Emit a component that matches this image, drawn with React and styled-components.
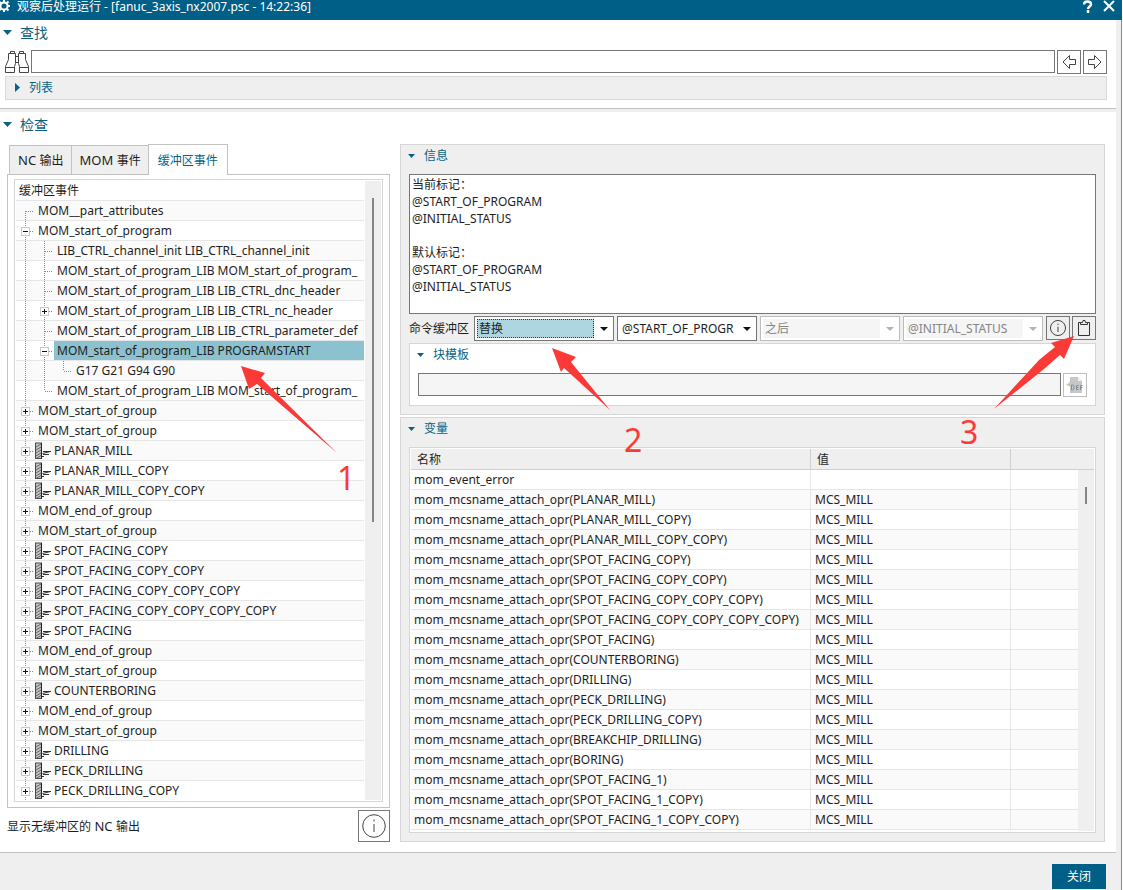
import React from "react";
import styled, { createGlobalStyle } from "styled-components";

const GlobalStyle = createGlobalStyle`
  * {
    box-sizing: border-box;
  }

  body {
    margin: 0;
    background: #fff;
    color: #1e1e1e;
    font-family: "Noto Sans", "Noto Sans CJK SC", sans-serif;
    font-size: 12px;
    line-height: 17px;
  }

  button,
  input,
  select,
  textarea {
    margin: 0;
    color: inherit;
    font: inherit;
    border-radius: 0;
  }
`;

const Dialog = styled.div`
  position: relative;
  display: flex;
  flex-direction: column;
  min-height: 100vh;
  margin-right: 1px;
`;

const TitleBar = styled.header`
  display: flex;
  align-items: center;
  height: 20px;
  padding: 0 7px 6px 0;
  background: #005f87;
  color: #fff;
`;

const Title = styled.h1`
  flex: 1;
  margin: 0 0 0 6px;
  font-size: 12px;
  font-weight: 400;
  line-height: 14px;
`;

const TitleButton = styled.button`
  display: flex;
  margin-left: 9px;
  padding: 0;
  border: 0;
  background: none;
  color: #fff;
`;

const Body = styled.div`
  display: flex;
  flex: 1;
  flex-direction: column;
  padding-right: 5px;
  border-right: 1px solid #8c8c8c;
  background: #efefef;
`;

const FindSection = styled.section`
  padding: 0 9px 8px 5px;
  border-bottom: 1px solid #c3c3c3;
  background: #fff;
`;

const CheckSection = styled.section`
  margin-top: 3px;
  padding: 0 11px 10px 7px;
  border-bottom: 1px solid #c3c3c3;
  background: #fff;
`;

const SectionTitle = styled.h2`
  display: flex;
  align-items: center;
  gap: 8px;
  height: ${({ $tall }) => ($tall ? "32px" : "30px")};
  margin: 0 0 0 ${({ $inset }) => $inset};
  padding-bottom: ${({ $tall }) => ($tall ? "8px" : "6px")};
  color: #0b6280;
  font-size: 14px;
  font-weight: 400;
`;

const GroupTitle = styled.h3`
  display: flex;
  align-items: center;
  gap: 9px;
  height: 29px;
  margin: 0;
  padding: 0 0 8px 7px;
  color: #0b6280;
  font-size: 12px;
  font-weight: 400;
`;

const SearchRow = styled.div`
  display: flex;
  gap: 2px;
  margin-bottom: 2px;
`;

const TextInput = styled.input`
  flex: 1;
  min-width: 0;
  height: 23px;
  padding: 0 4px;
  border: 1px solid #767676;
  background: ${({ readOnly }) => (readOnly ? "#f5f5f5" : "#fff")};
  outline: 0;
`;

const IconButton = styled.button`
  display: flex;
  flex: none;
  align-items: center;
  justify-content: center;
  width: ${({ $size = "24px" }) => $size};
  height: ${({ $size = "24px" }) => $size};
  padding: 0;
  border: 1px solid ${({ disabled }) => (disabled ? "#bdbdbd" : "#767676")};
  background: ${({ $flat }) => ($flat ? "transparent" : "#fff")};
  color: #444;
`;

const ListBar = styled.button`
  display: flex;
  align-items: center;
  gap: 9px;
  width: 100%;
  height: 24px;
  padding: 0 9px 2px;
  border: 1px solid #d9d9d9;
  background: #efefef;
  color: #0b6280;
`;

const Columns = styled.div`
  display: flex;
  gap: 10px;
`;

const LeftColumn = styled.div`
  display: flex;
  flex: none;
  flex-direction: column;
  width: 383px;
`;

const RightColumn = styled.div`
  display: flex;
  flex: 1;
  flex-direction: column;
  gap: 2px;
  min-width: 0;
`;

const Tabs = styled.div`
  display: flex;
  align-items: flex-end;
  padding-left: 2px;
`;

const Tab = styled.button`
  height: ${({ $active }) => ($active ? "31px" : "29px")};
  margin-bottom: ${({ $active }) => ($active ? "-1px" : "0")};
  padding: ${({ $active }) => ($active ? "0 9px" : "0 7px 0 8px")};
  border: 1px solid #c3c3c3;
  border-right-width: ${({ $active }) => ($active ? "1px" : "0")};
  border-bottom: 0;
  background: ${({ $active }) => ($active ? "#fff" : "#efefef")};
  color: ${({ $active }) => ($active ? "#0b6280" : "inherit")};
  z-index: ${({ $active }) => ($active ? 1 : 0)};
`;

const Latin = styled.span`
  font-size: 13px;
`;

const TabPanel = styled.div`
  padding: 4px 6px 5px;
  border: 1px solid #c3c3c3;
`;

const TreeBox = styled.div`
  display: flex;
  padding: 1px;
  border: 1px solid #d6d6d6;
`;

const Tree = styled.div`
  flex: 1;
  min-width: 0;
  overflow: hidden;
`;

const TreeRow = styled.div`
  display: flex;
  height: 20px;
  border-bottom: 1px solid #e6e6e6;
  background: #fff;
  white-space: nowrap;

  &:nth-child(even) {
    background: #fafafa;
  }

  &:last-child {
    height: 19px;
    border-bottom: 0;
  }
`;

const TreeLabel = styled.span`
  flex: 1;
  min-width: 0;
  overflow: hidden;
  padding-left: 3px;
  background: ${({ $selected }) => ($selected ? "#8cc2d0" : "transparent")};
  line-height: 19px;
`;

const TreeGuide = styled.svg`
  flex: none;
  width: 19px;
  height: 20px;
`;

const ScrollTrack = styled.div`
  flex: none;
  width: 16px;
  margin-left: 1px;
  padding: 17px 7px 0;
  background: #efefef;
`;

const ScrollThumb = styled.div`
  height: ${({ $length }) => $length};
  background: #858585;
`;

const LeftFooter = styled.div`
  display: flex;
  align-items: center;
  justify-content: space-between;
  margin-top: 2px;
`;

const Panel = styled.section`
  padding: 0 8px 8px;
  border: 1px solid #d6d6d6;
  background: #efefef;

  > ${GroupTitle} {
    margin-left: -8px;
  }
`;

const InfoText = styled.textarea`
  display: block;
  width: 100%;
  height: 140px;
  padding: 1px 2px;
  border: 1px solid #767676;
  background: #fff;
  outline: 0;
  resize: none;
`;

const CommandRow = styled.div`
  display: flex;
  gap: 3px;
  margin: 2px 0;
`;

const CommandLabel = styled.label`
  flex: none;
  width: 62px;
  line-height: 25px;
`;

const CommandButtons = styled.div`
  display: flex;
  gap: 2px;
`;

const SelectFrame = styled.div`
  display: flex;
  flex: 1;
  align-items: center;
  min-width: 0;
  height: 25px;
  padding: 2px 5px 2px 2px;
  border: 1px solid ${({ $disabled }) => ($disabled ? "#bdbdbd" : "#767676")};
  background: #fff;
  color: ${({ $disabled }) => ($disabled ? "#b4b4b4" : "#111")};
`;

const Select = styled.select`
  flex: 1;
  min-width: 0;
  height: 19px;
  margin-right: 6px;
  padding: 0 1px;
  border: 1px ${({ $focused }) => ($focused ? "dotted #333" : "solid transparent")};
  background: ${({ $focused, disabled }) =>
    $focused ? "#add6e0" : disabled ? "#f5f5f5" : "#fff"};
  color: #1e1e1e;
  outline: 0;
  appearance: none;

  &:disabled {
    color: #858585;
    opacity: 1;
  }
`;

const TemplateBox = styled.div`
  padding: 0 8px 8px;
  border: 1px solid #d6d6d6;
  background: #fff;

  > ${GroupTitle} {
    margin-left: -8px;
  }
`;

const TemplateRow = styled.div`
  display: flex;
  gap: 2px;
`;

const VariableBox = styled.div`
  position: relative;
  padding: 1px 1px 2px;
  border: 1px solid #d6d6d6;
  background: #fff;
`;

const VariableTable = styled.table`
  width: 100%;
  border-collapse: separate;
  border-spacing: 0;
  table-layout: fixed;

  th,
  td {
    overflow: hidden;
    padding: 0 0 0 3px;
    border-right: 1px solid #e6e6e6;
    border-bottom: 1px solid #e6e6e6;
    text-align: left;
    white-space: nowrap;
  }

  th {
    height: 21px;
    padding-left: 6px;
    border-color: #cfcfcf;
    background: #efefef;
    font-weight: 400;
  }

  td {
    height: 20px;
    line-height: 19px;
  }

  td + td {
    padding-left: 4px;
  }

  th:last-child,
  td:last-child {
    border-right: 0;
  }

  tbody tr:nth-child(even) {
    background: #fafafa;
  }
`;

/* floats over the right end of the last table column */
const TableScroll = styled(ScrollTrack)`
  position: absolute;
  top: 22px;
  right: 1px;
  bottom: 1px;
`;

const Footer = styled.footer`
  display: flex;
  flex: 1;
  align-items: flex-start;
  justify-content: flex-end;
  padding: 11px 10px 1px;
`;

const CloseButton = styled.button`
  width: 54px;
  height: 25px;
  padding: 0;
  border: 0;
  background: #005f87;
  color: #fff;
`;

const Annotations = styled.svg`
  position: absolute;
  top: 0;
  left: 0;
  fill: #fb3a37;
  font-size: 32px;
  pointer-events: none;
`;

const treeRows = [
  { guides: ["first"], label: "MOM__part_attributes" },
  { guides: ["minus"], label: "MOM_start_of_program" },
  { guides: ["line", "tee"], label: "LIB_CTRL_channel_init LIB_CTRL_channel_init" },
  { guides: ["line", "tee"], label: "MOM_start_of_program_LIB MOM_start_of_program_" },
  { guides: ["line", "tee"], label: "MOM_start_of_program_LIB LIB_CTRL_dnc_header" },
  { guides: ["line", "plus"], label: "MOM_start_of_program_LIB LIB_CTRL_nc_header" },
  { guides: ["line", "tee"], label: "MOM_start_of_program_LIB LIB_CTRL_parameter_def" },
  { guides: ["line", "minus"], label: "MOM_start_of_program_LIB PROGRAMSTART", selected: true },
  { guides: ["line", "line", "end"], label: "G17 G21 G94 G90" },
  { guides: ["line", "end"], label: "MOM_start_of_program_LIB MOM_start_of_program_" },
  { guides: ["plus"], label: "MOM_start_of_group" },
  { guides: ["plus"], label: "MOM_start_of_group" },
  { guides: ["plus"], label: "PLANAR_MILL", tool: true },
  { guides: ["plus"], label: "PLANAR_MILL_COPY", tool: true },
  { guides: ["plus"], label: "PLANAR_MILL_COPY_COPY", tool: true },
  { guides: ["plus"], label: "MOM_end_of_group" },
  { guides: ["plus"], label: "MOM_start_of_group" },
  { guides: ["plus"], label: "SPOT_FACING_COPY", tool: true },
  { guides: ["plus"], label: "SPOT_FACING_COPY_COPY", tool: true },
  { guides: ["plus"], label: "SPOT_FACING_COPY_COPY_COPY", tool: true },
  { guides: ["plus"], label: "SPOT_FACING_COPY_COPY_COPY_COPY", tool: true },
  { guides: ["plus"], label: "SPOT_FACING", tool: true },
  { guides: ["plus"], label: "MOM_end_of_group" },
  { guides: ["plus"], label: "MOM_start_of_group" },
  { guides: ["plus"], label: "COUNTERBORING", tool: true },
  { guides: ["plus"], label: "MOM_end_of_group" },
  { guides: ["plus"], label: "MOM_start_of_group" },
  { guides: ["plus"], label: "DRILLING", tool: true },
  { guides: ["plus"], label: "PECK_DRILLING", tool: true },
  { guides: ["plus"], label: "PECK_DRILLING_COPY", tool: true },
];

const operations = [
  "PLANAR_MILL",
  "PLANAR_MILL_COPY",
  "PLANAR_MILL_COPY_COPY",
  "SPOT_FACING_COPY",
  "SPOT_FACING_COPY_COPY",
  "SPOT_FACING_COPY_COPY_COPY",
  "SPOT_FACING_COPY_COPY_COPY_COPY",
  "SPOT_FACING",
  "COUNTERBORING",
  "DRILLING",
  "PECK_DRILLING",
  "PECK_DRILLING_COPY",
  "BREAKCHIP_DRILLING",
  "BORING",
  "SPOT_FACING_1",
  "SPOT_FACING_1_COPY",
  "SPOT_FACING_1_COPY_COPY",
];

const infoText = `当前标记：
@START_OF_PROGRAM
@INITIAL_STATUS

默认标记：
@START_OF_PROGRAM
@INITIAL_STATUS`;

const Guide = ({ type }) => {
  const top = type === "first" ? 10 : 0;
  const bottom = type === "end" ? 10 : 20;
  const box = type === "plus" || type === "minus";

  return (
    <TreeGuide viewBox="0 0 19 20" shapeRendering="crispEdges" aria-hidden="true">
      <path
        d={`M9.5 ${top}V${bottom}${type === "line" ? "" : "M10 10.5H18"}`}
        fill="none"
        stroke="#8a8a8a"
        strokeDasharray="1 1"
      />
      {box && <rect x="5.5" y="6.5" width="8" height="8" fill="#fff" stroke="#c9c9c9" />}
      {box && <path d="M7 10.5h5" stroke="#111" />}
      {type === "plus" && <path d="M9.5 8v5" stroke="#111" />}
    </TreeGuide>
  );
};

const Caret = ({ big }) =>
  big ? (
    <svg width="9" height="5" viewBox="0 0 9 5" aria-hidden="true">
      <path d="M0 0h9L4.5 5z" fill="#0b6280" />
    </svg>
  ) : (
    <svg width="7" height="4" viewBox="0 0 7 4" aria-hidden="true">
      <path d="M0 0h7L3.5 4z" fill="#0b6280" />
    </svg>
  );

const GearIcon = () => (
  <svg width="11" height="14" viewBox="0 0 11 14" fill="none" stroke="#fff" aria-hidden="true">
    <circle cx="4" cy="6" r="3.6" strokeWidth="2" />
    <path d="M4 0v2M4 10v2M8 6h2M7 3l1.5-1.5M7 9l1.5 1.5M1 9l-1 1M1 3L0 2" strokeWidth="2" />
  </svg>
);

const BinocularsIcon = () => (
  <svg width="24" height="24" viewBox="0 0 24 24" fill="none" stroke="#444" aria-hidden="true">
    <path d="M5.5 3.5v-2h4v2M18.5 3.5v-2h-4v2" />
    <path d="M10.5 3.5h-7v6l-3 7v6h9v-6l1-3zM13.5 3.5h7v6l3 7v6h-9v-6l-1-3z" />
    <path d="M.5 17.5h9M14.5 17.5h9M10.5 6.5h3M10.5 12.5h3" />
  </svg>
);

const ArrowIcon = ({ right }) => (
  <svg width="16" height="16" viewBox="0 0 16 16" fill="none" stroke="#444" aria-hidden="true">
    {right ? (
      <path d="M1.5 5.5h6v-4l6.5 6.5-6.5 6.5v-4h-6z" />
    ) : (
      <path d="M14.5 5.5h-6v-4l-6.5 6.5 6.5 6.5v-4h6z" />
    )}
  </svg>
);

const ToolIcon = () => (
  <svg width="16" height="19" viewBox="0 0 16 19" aria-hidden="true">
    <rect x="0.5" y="2" width="6" height="15.5" fill="#c4c4c4" stroke="#4a4a4a" />
    <path d="M1 6l5-3M1 9l5-3M1 12l5-3M1 15l5-3M1 17.5l5-3" stroke="#666" />
    <path d="M6.5 2v15.5" stroke="#222" />
    <path d="M8 10.5h8M8 13.5h6M7 15.5h2M7.5 12.5l8-2" fill="none" stroke="#333" />
  </svg>
);

const InfoIcon = ({ size }) => (
  <svg width={size} height={size} viewBox="0 0 24 24" fill="none" stroke="#444" aria-hidden="true">
    <circle cx="12" cy="12" r="11.3" strokeWidth={24 / size} />
    <path d="M12 10v8M12 5.5v2" strokeWidth={24 / size} />
  </svg>
);

const ClipboardIcon = () => (
  <svg width="12" height="16" viewBox="0 0 12 16" fill="none" stroke="#333" aria-hidden="true">
    <path d="M2.5 2.5h-2v13h11v-13h-2" />
    <path d="M2.5 4.5v-2h2l.5-2h2l.5 2h2v2z" />
  </svg>
);

const DefIcon = () => (
  <svg width="18" height="18" viewBox="0 0 18 18" aria-hidden="true">
    <path d="M4 1h8l4 4v12H4z" fill="#c4c8cd" />
    <path d="M12 1v4h4z" fill="#eef0f2" />
    <path d="M0 9l3-2 2-4 1 3 3 1-2 3-2 1-2-1z" fill="#c9c5b4" />
    <path
      d="M5.5 9v5h1l1.5-1v-3l-1.5-1zM12.5 9.5h-2v4h2M10.5 11.5h2M14.5 14v-4.5h2M14.5 11.5h2"
      fill="none"
      stroke="#868d96"
    />
  </svg>
);

const Dropdown = ({ id, label, value, focused, disabled }) => (
  <SelectFrame $disabled={disabled}>
    <Select id={id} aria-label={label} $focused={focused} disabled={disabled}>
      <option>{value}</option>
    </Select>
    <svg width="8" height="4" viewBox="0 0 8 4" aria-hidden="true">
      <path d="M0 0h8L4 4z" fill="currentColor" />
    </svg>
  </SelectFrame>
);

const EventTree = () => (
  <TreeBox>
    <Tree>
      <TreeRow>
        <TreeLabel>缓冲区事件</TreeLabel>
      </TreeRow>
      {treeRows.map((row, index) => (
        <TreeRow key={index}>
          {row.guides.map((type, level) => (
            <Guide key={level} type={type} />
          ))}
          {row.tool && <ToolIcon />}
          <TreeLabel $selected={row.selected}>{row.label}</TreeLabel>
        </TreeRow>
      ))}
    </Tree>
    <ScrollTrack>
      <ScrollThumb $length="324px" />
    </ScrollTrack>
  </TreeBox>
);

const Variables = () => (
  <VariableBox>
    <VariableTable>
      <colgroup>
        <col width="400" />
        <col width="200" />
        <col />
      </colgroup>
      <thead>
        <tr>
          <th>名称</th>
          <th>值</th>
          <th />
        </tr>
      </thead>
      <tbody>
        <tr>
          <td>mom_event_error</td>
          <td />
          <td />
        </tr>
        {operations.map((name) => (
          <tr key={name}>
            <td>mom_mcsname_attach_opr({name})</td>
            <td>MCS_MILL</td>
            <td />
          </tr>
        ))}
      </tbody>
    </VariableTable>
    <TableScroll>
      <ScrollThumb $length="17px" />
    </TableScroll>
  </VariableBox>
);

export default function App() {
  return (
    <>
      <GlobalStyle />
      <Dialog>
        <TitleBar>
          <GearIcon />
          <Title>观察后处理运行 - [fanuc_3axis_nx2007.psc - 14:22:36]</Title>
          <TitleButton aria-label="帮助">
            <svg width="12" height="14" viewBox="0 0 12 14" fill="none" stroke="#fff" strokeWidth="2.5">
              <path d="M2 4.5c0-4 7-4 7 0 0 2-3 2-3 4.5M6 10v3" />
            </svg>
          </TitleButton>
          <TitleButton aria-label="关闭窗口">
            <svg width="12" height="14" viewBox="0 0 12 14" fill="none" stroke="#fff" strokeWidth="2">
              <path d="M1 1l10 10M11 1L1 11" />
            </svg>
          </TitleButton>
        </TitleBar>

        <Body>
          <FindSection>
            <SectionTitle $inset="-2px">
              <Caret big />
              查找
            </SectionTitle>
            <SearchRow>
              <BinocularsIcon />
              <TextInput aria-label="查找" />
              <IconButton aria-label="上一个">
                <ArrowIcon />
              </IconButton>
              <IconButton aria-label="下一个">
                <ArrowIcon right />
              </IconButton>
            </SearchRow>
            <ListBar>
              <svg width="5" height="9" viewBox="0 0 5 9" aria-hidden="true">
                <path d="M0 0v9l5-4.5z" fill="#0b6280" />
              </svg>
              列表
            </ListBar>
          </FindSection>

          <CheckSection>
            <SectionTitle $tall $inset="-4px">
              <Caret big />
              检查
            </SectionTitle>
            <Columns>
              <LeftColumn>
                <Tabs>
                  <Tab>
                    <Latin>NC </Latin>输出
                  </Tab>
                  <Tab>
                    <Latin>MOM </Latin>事件
                  </Tab>
                  <Tab $active>缓冲区事件</Tab>
                </Tabs>
                <TabPanel>
                  <EventTree />
                </TabPanel>
                <LeftFooter>
                  <span>
                    显示无缓冲区的<Latin> NC </Latin>输出
                  </span>
                  <IconButton $size="32px" aria-label="信息">
                    <InfoIcon size={24} />
                  </IconButton>
                </LeftFooter>
              </LeftColumn>

              <RightColumn>
                <Panel>
                  <GroupTitle>
                    <Caret />
                    信息
                  </GroupTitle>
                  <InfoText aria-label="信息" readOnly value={infoText} />
                  <CommandRow>
                    <CommandLabel htmlFor="command">命令缓冲区</CommandLabel>
                    <Dropdown id="command" value="替换" focused />
                    <Dropdown label="标记" value="@START_OF_PROGR" />
                    <Dropdown label="位置" value="之后" disabled />
                    <Dropdown label="参考标记" value="@INITIAL_STATUS" disabled />
                    <CommandButtons>
                      <IconButton $flat aria-label="信息">
                        <InfoIcon size={16} />
                      </IconButton>
                      <IconButton $flat aria-label="复制到剪贴板">
                        <ClipboardIcon />
                      </IconButton>
                    </CommandButtons>
                  </CommandRow>
                  <TemplateBox>
                    <GroupTitle>
                      <Caret />
                      块模板
                    </GroupTitle>
                    <TemplateRow>
                      <TextInput aria-label="块模板" readOnly />
                      <IconButton disabled aria-label="DEF">
                        <DefIcon />
                      </IconButton>
                    </TemplateRow>
                  </TemplateBox>
                </Panel>

                <Panel>
                  <GroupTitle>
                    <Caret />
                    变量
                  </GroupTitle>
                  <Variables />
                </Panel>
              </RightColumn>
            </Columns>
          </CheckSection>

          <Footer>
            <CloseButton>关闭</CloseButton>
          </Footer>
        </Body>

        <Annotations width="1110" height="500" viewBox="0 0 1110 500">
          <path d="M241 366l24 7-4 5 76 75-80-69-8 5z" />
          <path d="M552 348l24 9-5 5 39 48-46-42-3 4z" />
          <path d="M1074 336l-23 7 4 4-16 13-45 49 50-40 16-14 4 4z" />
          <text x="337" y="490">1</text>
          <text x="624" y="452">2</text>
          <text x="960" y="444">3</text>
        </Annotations>
      </Dialog>
    </>
  );
}
